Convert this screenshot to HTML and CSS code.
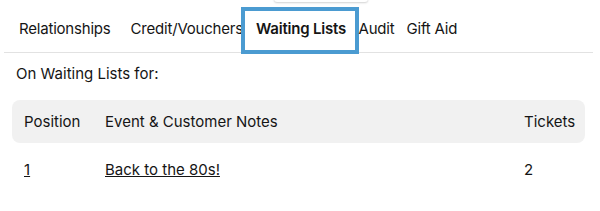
FILE: index.html
```html
<!DOCTYPE html>
<html lang="en">
<head>
    <meta charset="UTF-8">
    <title>Customer - Waiting Lists</title>
    <link rel="stylesheet" href="styles.css">
</head>
<body>
    <div class="popup-edge"></div>

    <nav class="tabs">
        <a href="#">Relationships</a>
        <a href="#">Credit/Vouchers</a>
        <a href="#" class="active">Waiting Lists</a>
        <a href="#">Audit</a>
        <a href="#">Gift Aid</a>
    </nav>

    <div class="panel">
        <p class="intro">On Waiting Lists for:</p>

        <table class="waitlist">
            <thead>
                <tr>
                    <th class="col-pos">Position</th>
                    <th>Event &amp; Customer Notes</th>
                    <th class="col-tickets">Tickets</th>
                </tr>
            </thead>
            <tbody>
                <tr>
                    <td><a href="#">1</a></td>
                    <td><a href="#">Back to the 80s!</a></td>
                    <td>2</td>
                </tr>
            </tbody>
        </table>
    </div>
</body>
</html>
```

FILE: styles.css
```css
* {
    margin: 0;
    padding: 0;
    box-sizing: border-box;
}

body {
    font-family: Inter, 'Liberation Sans', sans-serif;
    font-size: 15px;
    color: #151515;
    background: #fff;
    position: relative;
}

/* bottom edge of something scrolled off above */
.popup-edge {
    position: absolute;
    top: -6px;
    left: 274px;
    width: 94px;
    height: 8px;
    background: #fff;
    border-radius: 0 0 3px 3px;
    box-shadow: 0 1px 2px rgba(0, 0, 0, 0.18);
}

.tabs {
    display: flex;
    align-items: center;
    margin: 0 7px 0 4px;
    padding: 8px 0 0 15px;
    height: 53px;
    border-bottom: 1px solid #e2e2e2;
}

.tabs a {
    color: #151515;
    text-decoration: none;
    height: 47px;
    display: flex;
    align-items: center;
    padding-bottom: 3px;
    margin-right: 20px;
    letter-spacing: -0.2px;
}

.tabs a.active {
    font-weight: 600;
    border: 4.5px solid #4b9bd1;
    padding: 0 8.5px 3px 11px;
    margin-left: -22px;
    margin-right: 0;
    height: 47px;
}

.tabs a:last-child {
    margin-left: -8px;
}

.panel {
    padding: 11px 15px 0 12px;
}

.intro {
    padding-left: 4px;
    margin-bottom: 17px;
}

.waitlist {
    width: 573px;
    table-layout: fixed;
    border-collapse: separate;
    border-spacing: 0;
}

.waitlist th {
    background: #f1f1f1;
    font-weight: 400;
    text-align: left;
    height: 43px;
    padding: 0 12px;
}

.waitlist th:first-child {
    border-radius: 8px 0 0 8px;
}

.waitlist th:last-child {
    border-radius: 0 8px 8px 0;
}

.waitlist .col-pos {
    width: 81px;
}

.waitlist .col-tickets {
    width: 61px;
    padding: 0;
}

.waitlist td {
    padding: 0 12px;
    height: 52px;
}

.waitlist td:last-child {
    padding: 0;
}

.waitlist td a {
    color: #151515;
}
```
